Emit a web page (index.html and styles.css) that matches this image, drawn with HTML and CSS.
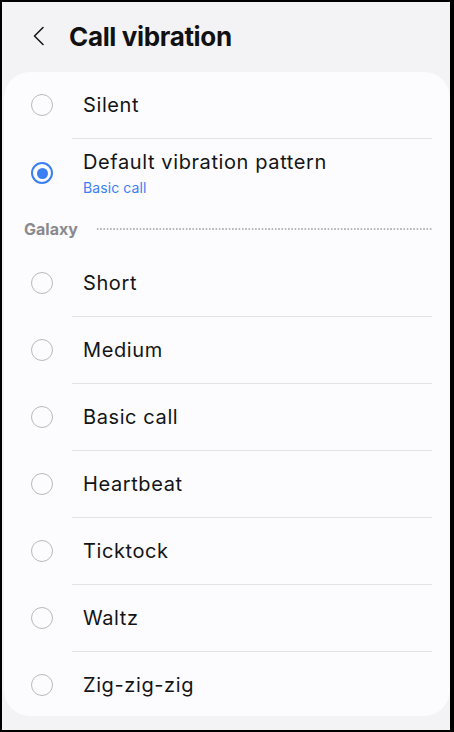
FILE: index.html
```html
<!DOCTYPE html>
<html lang="en">
<head>
  <meta charset="UTF-8">
  <meta name="viewport" content="width=device-width, initial-scale=1.0">
  <title>Call vibration</title>
  <link rel="stylesheet" href="styles.css">
</head>
<body>
  <div class="screen">
    <header class="topbar">
      <svg class="back" width="14" height="20" viewBox="0 0 14 20">
        <path d="M11 1.5 L2.5 10 L11 18.5" fill="none" stroke="#1a1a1a" stroke-width="1.6" stroke-linecap="round" stroke-linejoin="round"/>
      </svg>
      <h1>Call vibration</h1>
    </header>
    <main class="card">
      <div class="row">
        <span class="radio"></span>
        <span class="label">Silent</span>
      </div>
      <div class="row row-two">
        <span class="radio checked"></span>
        <span class="text">
          <span class="label">Default vibration pattern</span>
          <span class="sub">Basic call</span>
        </span>
      </div>
      <div class="group">
        <span class="group-name">Galaxy</span>
        <span class="dots"></span>
      </div>
      <div class="row"><span class="radio"></span><span class="label">Short</span></div>
      <div class="row"><span class="radio"></span><span class="label">Medium</span></div>
      <div class="row"><span class="radio"></span><span class="label">Basic call</span></div>
      <div class="row"><span class="radio"></span><span class="label">Heartbeat</span></div>
      <div class="row"><span class="radio"></span><span class="label">Ticktock</span></div>
      <div class="row"><span class="radio"></span><span class="label">Waltz</span></div>
      <div class="row last"><span class="radio"></span><span class="label">Zig-zig-zig</span></div>
    </main>
  </div>
</body>
</html>
```

FILE: styles.css
```css
html, body {
  margin: 0;
  background-color: #000000;
}
.screen {
  box-sizing: border-box;
  width: 454px;
  height: 732px;
  border-style: solid;
  border-color: #000000;
  border-width: 2px 4px 2px 2px;
  background-color: #f3f3f5;
  font-family: Inter, Roboto, "Noto Sans", sans-serif;
  color: #111111;
  overflow: hidden;
}
.topbar {
  height: 70px;
  display: flex;
  align-items: center;
  padding-left: 30px;
  box-sizing: border-box;
  padding-bottom: 2px;
}
.back {
  margin-right: 23px;
}
.topbar h1 {
  margin: 0;
  font-size: 26px;
  font-weight: 700;
  letter-spacing: -0.35px;
  color: #111111;
}
.card {
  display: block;
  margin: 0 0 0 2px;
  background-color: #fcfcfe;
  border-radius: 26px;
  height: 644px;
  overflow: hidden;
}
/* list rows with an inset divider drawn as a background line */
.row {
  display: flex;
  align-items: center;
  padding-left: 27px;
  margin-right: 18px;
  background-image: linear-gradient(#e3e3e6, #e3e3e6);
  background-size: calc(100% - 68px) 1px;
  background-position: 68px 100%;
  background-repeat: no-repeat;
  height: 67px;
  box-sizing: border-box;
  padding-bottom: 1px;
}
.row-two {
  height: 68px;
  background-image: none;
  padding-bottom: 0;
}
.row.last {
  background-image: none;
  height: 66px;
}
.radio {
  box-sizing: border-box;
  width: 22px;
  height: 22px;
  border-radius: 50%;
  border: 1.6px solid #b9b9bc;
  margin-right: 30px;
  flex-shrink: 0;
  display: flex;
  align-items: center;
  justify-content: center;
}
.radio.checked {
  border: 2.4px solid #3b7ff5;
}
.radio.checked::after {
  content: "";
  width: 11px;
  height: 11px;
  border-radius: 50%;
  background-color: #3b7ff5;
}
.label {
  font-size: 20px;
  line-height: 24px;
  letter-spacing: 0.6px;
  color: #141414;
}
.text {
  display: flex;
  flex-direction: column;
  margin-top: 2px;
}
.sub {
  font-size: 14px;
  line-height: 20px;
  letter-spacing: 0.1px;
  color: #3b7ff5;
  margin-top: 4px;
}
.group {
  height: 43px;
  display: flex;
  align-items: center;
  padding-left: 20px;
  margin-right: 18px;
}
.group-name {
  font-size: 16px;
  font-weight: 700;
  color: #8a8a8d;
  margin-right: 18px;
}
.dots {
  flex: 1;
  height: 2px;
  background-image: radial-gradient(circle, #b8b8bb 0.7px, transparent 1px);
  background-size: 3.3px 2px;
  margin-top: 1px;
}
```
